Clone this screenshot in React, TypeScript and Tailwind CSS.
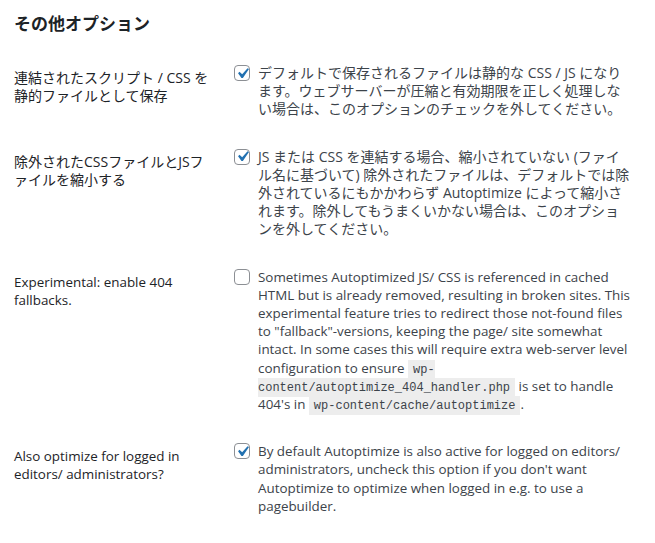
import React from "react";

type Row = {
  label: string[];
  checked: boolean;
  jp: boolean;
  body: React.ReactNode;
};

const Code = ({ children }: { children: React.ReactNode }) => (
  <code className="bg-[#ededed] px-[5px] pt-[3px] pb-[2px] font-['Liberation_Mono',monospace] text-[12px] leading-none text-[#3c434a]">
    {children}
  </code>
);

const Checkbox = ({ checked }: { checked: boolean }) => (
  <span className="mt-px flex h-4 w-4 shrink-0 items-center justify-center rounded-[4px] border border-[#8c8f94] bg-white">
    {checked && (
      <svg viewBox="0 0 20 20" className="h-[21px] w-[21px] shrink-0">
        <path
          d="M14.83 4.89l1.34.94-5.81 8.38H9.02L5.78 9.67l1.34-1.25 2.57 2.4z"
          fill="#2271b1"
        />
      </svg>
    )}
  </span>
);

const rows: Row[] = [
  {
    label: ["連結されたスクリプト / CSS を", "静的ファイルとして保存"],
    checked: true,
    jp: true,
    body: (
      <>
        デフォルトで保存されるファイルは静的な CSS / JS になり
        <br />
        ます。ウェブサーバーが圧縮と有効期限を正しく処理しな
        <br />
        い場合は、このオプションのチェックを外してください。
      </>
    ),
  },
  {
    label: ["除外されたCSSファイルとJSフ", "ァイルを縮小する"],
    checked: true,
    jp: true,
    body: (
      <>
        JS または CSS を連結する場合、縮小されていない (ファイ
        <br />
        ル名に基づいて) 除外されたファイルは、デフォルトでは除
        <br />
        外されているにもかかわらず Autoptimize によって縮小さ
        <br />
        れます。除外してもうまくいかない場合は、このオプショ
        <br />
        ンを外してください。
      </>
    ),
  },
  {
    label: ["Experimental: enable 404", "fallbacks."],
    checked: false,
    jp: false,
    body: (
      <>
        Sometimes Autoptimized JS/ CSS is referenced in cached
        <br />
        HTML but is already removed, resulting in broken sites. This
        <br />
        experimental feature tries to redirect those not-found files
        <br />
        to "fallback"-versions, keeping the page/ site somewhat
        <br />
        intact. In some cases this will require extra web-server level
        <br />
        configuration to ensure{" "}
        <Code>
          wp-
          <br />
          content/autoptimize_404_handler.php
        </Code>{" "}
        is set to handle
        <br />
        404's in <Code>wp-content/cache/autoptimize</Code>.
      </>
    ),
  },
  {
    label: ["Also optimize for logged in", "editors/ administrators?"],
    checked: true,
    jp: false,
    body: (
      <>
        By default Autoptimize is also active for logged on editors/
        <br />
        administrators, uncheck this option if you don't want
        <br />
        Autoptimize to optimize when logged in e.g. to use a
        <br />
        pagebuilder.
      </>
    ),
  },
];

export default function App() {
  return (
    <div className="min-h-[543px] w-[655px] bg-white pl-[14px] pt-[13px] font-['Open_Sans','Noto_Sans_CJK_JP',sans-serif] text-[#3c434a]">
      <h2 className="text-[17px] font-bold leading-[22px] text-[#1d2327]">
        その他オプション
      </h2>
      <div className="mt-[14px] flex flex-col">
        {rows.map((row, i) => (
          <div
            key={i}
            className={
              row.jp
                ? "flex pt-[15px] pb-[14px] text-[14px]"
                : "flex pt-[15px] pb-[14px] text-[13.4px]"
            }
          >
            <div className="w-[220px] shrink-0 pt-[5px] leading-[18px] text-[#1d2327]">
              {row.label.map((l) => (
                <div key={l}>{l}</div>
              ))}
            </div>
            <div className="flex gap-2">
              <Checkbox checked={row.checked} />
              <p className="w-[390px] leading-[18.2px]">{row.body}</p>
            </div>
          </div>
        ))}
      </div>
    </div>
  );
}
